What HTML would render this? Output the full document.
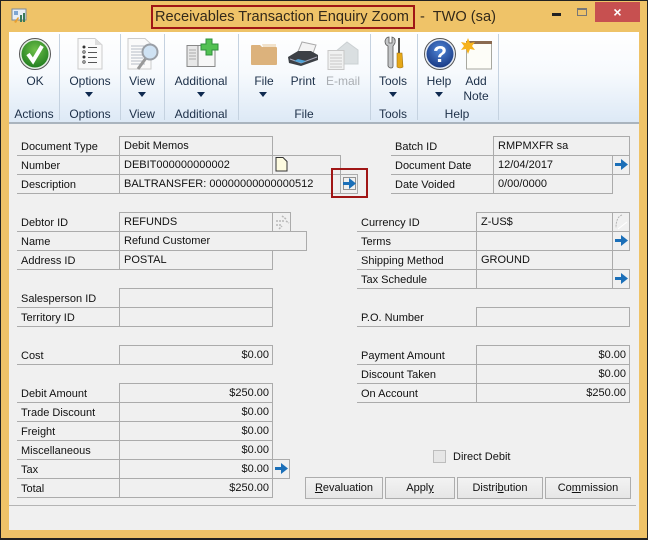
<!DOCTYPE html>
<html><head><meta charset="utf-8">
<style>
html,body{margin:0;padding:0}
body{width:648px;height:540px;overflow:hidden;position:relative;background:#efc368;font-family:"Liberation Sans",sans-serif;font-size:11px;color:#111}
div{box-sizing:border-box}
.a,.b,.l,.t,.g,.v,.r,.k{position:absolute;white-space:nowrap}
.b{border:1px solid #ababab;height:20px;padding:1px 0 0 4px;line-height:17px;overflow:hidden}
.b.r2{text-align:right;padding:1px 3px 0 0}
.l{border-bottom:1px solid #ababab;height:20px;padding-left:4px;line-height:22px}
.t{font-size:12px;color:#1c2f48;text-align:center;transform:translateX(-50%)}
.v{width:1px;background:#c5d2e0;top:34px;height:86px}
.k{width:0;height:0;border-left:4px solid transparent;border-right:4px solid transparent;border-top:5px solid #0f2a50;top:92px;margin-left:-4px}
.btn{position:absolute;top:477px;height:22px;border:1px solid #adadad;background:linear-gradient(#f3f3f3,#e6e6e6);text-align:center;line-height:20px;font-size:11px}
svg{position:absolute;overflow:visible}
</style></head><body>
<div class="a" style="left:0;top:0;width:648px;height:540px;border:1px solid #222;border-width:1px 1px 2px 1px"></div>
<svg style="left:11px;top:8px" width="16" height="16"><rect x="1" y="1" width="14" height="11" fill="#e8eef5" stroke="#7a8a9a"/><rect x="3" y="3" width="4" height="4" fill="#7ea5d0"/><path d="M9 14V7h2v7zM12 14V5h2v9z" fill="#3a7a5a"/><path d="M3 14l4-5 1 1-3 5z" fill="#e8a030"/></svg>
<div class="a" style="left:151px;top:5px;width:264px;height:24px;border:2px solid #a01616"></div>
<div class="a" style="left:155px;top:7px;font-size:14.6px;line-height:20px;color:#33291a">Receivables Transaction Enquiry Zoom</div>
<div class="a" style="left:420px;top:7px;font-size:14.6px;line-height:20px;color:#33291a;white-space:pre">-  TWO (sa)</div>
<div class="a" style="left:552px;top:13px;width:9px;height:3px;background:#222"></div>
<div class="a" style="left:577px;top:8px;width:10px;height:8px;border:1px solid #777;border-top-width:2px"></div>
<div class="a" style="left:595px;top:2px;width:45px;height:20px;background:#c75050;color:#fff;text-align:center;font-size:14px;line-height:20px;font-weight:bold">×</div>

<div class="a" style="left:9px;top:32px;width:630px;height:498px;background:#f0f0f0"></div>
<div class="a" style="left:9px;top:32px;width:630px;height:92px;background:linear-gradient(#fff 0%,#f7fafd 45%,#dde9f6 100%);border-bottom:2px solid #aab4be"></div>
<div class="v" style="left:59px"></div><div class="v" style="left:120px"></div><div class="v" style="left:164px"></div><div class="v" style="left:238px"></div><div class="v" style="left:370px"></div><div class="v" style="left:417px"></div><div class="v" style="left:498px"></div>

<!-- OK -->
<svg style="left:19px;top:38px" width="32" height="32" viewBox="0 0 32 32"><defs><radialGradient id="gr" cx=".5" cy=".35" r=".7"><stop offset="0" stop-color="#6fc04a"/><stop offset="1" stop-color="#1d7a1d"/></radialGradient><radialGradient id="bl" cx=".5" cy=".35" r=".7"><stop offset="0" stop-color="#4f86d8"/><stop offset="1" stop-color="#16357f"/></radialGradient></defs><circle cx="16" cy="16" r="15.500" fill="#e6efe6" stroke="#555"/><circle cx="16" cy="16" r="13.500" fill="url(#gr)"/><path d="M9 16l5 7 9-15" fill="none" stroke="#fff" stroke-width="4"/></svg>
<!-- Options -->
<svg style="left:77px;top:38px" width="26" height="32"><path d="M1 .5H18L25 7V31H1z" fill="#fafafa" stroke="#ccc"/><path d="M18 .5V7H25z" fill="#ddd"/><g fill="#333"><circle cx="7" cy="9" r="1.500"/><circle cx="7" cy="19" r="1.500"/></g><g fill="none" stroke="#555"><circle cx="7" cy="14" r="1.200"/><circle cx="7" cy="24" r="1.200"/><path d="M11 9.500h9M11 14.500h9M11 19.500h9M11 24.500h9"/></g></svg>
<!-- View -->
<svg style="left:127px;top:38px" width="32" height="32"><path d="M1 .5H18L24 6V31H1z" fill="#fafafa" stroke="#ccc"/><path d="M4 8h14M4 11h14M4 14h12M4 17h12M4 20h12M4 23h14M4 26h14" stroke="#b5bcc6"/><path d="M19 20L11 31" stroke="#999" stroke-width="3"/><circle cx="23" cy="14" r="7.500" fill="#cfe2f3" stroke="#9a9fa6" stroke-width="2"/></svg>
<!-- Additional -->
<svg style="left:186px;top:38px" width="33" height="30"><rect x="1" y="7.500" width="28" height="21" fill="#f7f7f7" stroke="#888"/><rect x="1" y="7.500" width="11" height="21" fill="#e8e8e8" stroke="#888"/><path d="M3 12h7M3 15h7M3 18h7M3 21h7" stroke="#aaa"/><path d="M20 1h6v5h6v6h-6v5h-6v-5h-5V6h5z" fill="#52c152" stroke="#2f8f3c"/></svg>
<!-- folder -->
<svg style="left:250px;top:42px" width="28" height="24"><path d="M1 4Q1 3 2 3H10L12 5H26Q27 5 27 6V22Q27 23 26 23H2Q1 23 1 22z" fill="#dcb27c"/><path d="M12 2H26V5H13z" fill="#f1e2cb"/></svg>
<!-- printer -->
<svg style="left:287px;top:40px" width="32" height="28"><path d="M10 14L15 2 29 5 25 16z" fill="#f3f3f3" stroke="#aaa"/><path d="M1 17L11 11H24L31 15V20L14 26 2 23z" fill="#3c4046"/><path d="M3 19L14 23 30 17" stroke="#aab" fill="none"/><path d="M7 21l8 2 4-2-8-2z" fill="#4fa3d8"/></svg>
<!-- email -->
<svg style="left:327px;top:38px" width="32" height="32"><path d="M8 14L20 4 31 12V26H8z" fill="#dadfe1" stroke="#cbd0d2"/><rect x="1" y="12.500" width="16" height="19" fill="#f0f1f1" stroke="#c8c8c8"/><path d="M3 17h12M3 20h12M3 23h12M3 26h12M3 29h12" stroke="#c8c8c8"/></svg>
<!-- tools -->
<svg style="left:384px;top:37px" width="22" height="33"><path d="M1 4Q2 0 5 0V6H8V0Q12 1 11 6Q10 8 9 9V29Q9 31 7 31T4 29V9Q1 8 1 4z" fill="#c4c6c8" stroke="#555" stroke-width=".8"/><rect x="14" y="1" width="2" height="15" fill="#555"/><path d="M13 16h5l1 14q-3 2-6 0z" fill="#e6a818" stroke="#a07010" stroke-width=".6"/></svg>
<!-- help -->
<svg style="left:424px;top:38px" width="32" height="32"><circle cx="16" cy="16" r="15.500" fill="#e6ecf6" stroke="#555"/><circle cx="16" cy="16" r="13.500" fill="url(#bl)"/><text x="16" y="24" font-family="Liberation Sans" font-weight="bold" font-size="23" fill="#fff" text-anchor="middle">?</text></svg>
<!-- note -->
<svg style="left:460px;top:38px" width="33" height="33"><rect x="6.500" y="3.500" width="25" height="27.500" fill="#fdfdf8" stroke="#a8a8a0"/><rect x="6" y="3" width="26" height="3" fill="#8a6a50"/><path d="M8 0l2 5 5-1-3 4 3 4-5-1-2 5-2-5-5 1 3-4-3-4 5 1z" fill="#f6b21c"/></svg>

<div class="t" style="left:35px;top:74px">OK</div>
<div class="t" style="left:90px;top:74px">Options</div><div class="k" style="left:89px"></div>
<div class="t" style="left:142px;top:74px">View</div><div class="k" style="left:142px"></div>
<div class="t" style="left:201px;top:74px">Additional</div><div class="k" style="left:201px"></div>
<div class="t" style="left:264px;top:74px">File</div><div class="k" style="left:263px"></div>
<div class="t" style="left:303px;top:74px">Print</div>
<div class="t" style="left:343px;top:74px;color:#a9adb2">E-mail</div>
<div class="t" style="left:393px;top:74px">Tools</div><div class="k" style="left:393px"></div>
<div class="t" style="left:439px;top:74px">Help</div><div class="k" style="left:439px"></div>
<div class="t" style="left:476px;top:74px">Add</div><div class="t" style="left:476px;top:89px">Note</div>
<div class="t" style="left:34px;top:107px">Actions</div>
<div class="t" style="left:90px;top:107px">Options</div>
<div class="t" style="left:142px;top:107px">View</div>
<div class="t" style="left:201px;top:107px">Additional</div>
<div class="t" style="left:304px;top:107px">File</div>
<div class="t" style="left:393px;top:107px">Tools</div>
<div class="t" style="left:457px;top:107px">Help</div>

<!-- left labels -->
<div class="l" style="left:17px;top:136px;width:102px">Document Type</div>
<div class="l" style="left:17px;top:155px;width:102px">Number</div>
<div class="l" style="left:17px;top:174px;width:102px">Description</div>
<div class="l" style="left:17px;top:212px;width:102px">Debtor ID</div>
<div class="l" style="left:17px;top:231px;width:102px">Name</div>
<div class="l" style="left:17px;top:250px;width:102px">Address ID</div>
<div class="l" style="left:17px;top:288px;width:102px">Salesperson ID</div>
<div class="l" style="left:17px;top:307px;width:102px">Territory ID</div>
<div class="l" style="left:17px;top:345px;width:102px">Cost</div>
<div class="l" style="left:17px;top:383px;width:102px">Debit Amount</div>
<div class="l" style="left:17px;top:402px;width:102px">Trade Discount</div>
<div class="l" style="left:17px;top:421px;width:102px">Freight</div>
<div class="l" style="left:17px;top:440px;width:102px">Miscellaneous</div>
<div class="l" style="left:17px;top:459px;width:102px">Tax</div>
<div class="l" style="left:17px;top:478px;width:102px">Total</div>
<!-- left values -->
<div class="b" style="left:119px;top:136px;width:154px">Debit Memos</div>
<div class="b" style="left:119px;top:155px;width:222px">DEBIT000000000002</div>
<div class="b" style="left:119px;top:174px;width:222px">BALTRANSFER: 00000000000000512</div>
<div class="a" style="left:272px;top:155px;width:1px;height:20px;background:#ababab"></div>
<div class="b" style="left:340px;top:174px;width:18px"></div>
<div class="b" style="left:119px;top:212px;width:154px">REFUNDS</div>
<div class="b" style="left:272px;top:212px;width:19px"></div>
<div class="b" style="left:119px;top:231px;width:188px">Refund Customer</div>
<div class="b" style="left:119px;top:250px;width:154px">POSTAL</div>
<div class="b" style="left:119px;top:288px;width:154px"></div>
<div class="b" style="left:119px;top:307px;width:154px"></div>
<div class="b r2" style="left:119px;top:345px;width:154px">$0.00</div>
<div class="b r2" style="left:119px;top:383px;width:154px">$250.00</div>
<div class="b r2" style="left:119px;top:402px;width:154px">$0.00</div>
<div class="b r2" style="left:119px;top:421px;width:154px">$0.00</div>
<div class="b r2" style="left:119px;top:440px;width:154px">$0.00</div>
<div class="b r2" style="left:119px;top:459px;width:154px">$0.00</div>
<div class="b" style="left:272px;top:459px;width:18px"></div>
<div class="b r2" style="left:119px;top:478px;width:154px">$250.00</div>
<!-- note icon -->
<svg style="left:275px;top:157px" width="13" height="15"><path d="M1 .5H8L12 4.500V14H1z" fill="#fdfbe0" stroke="#333"/></svg>
<!-- lookup faint -->
<svg style="left:273px;top:213px" width="17" height="17"><path d="M3 8h8M3 12h6M9 3l4 3M6 16l3-3M13 8l3 2" stroke="#b8b8b8" stroke-width="1.500" stroke-dasharray="2 1" fill="none"/></svg>
<!-- right labels -->
<div class="l" style="left:391px;top:136px;width:102px">Batch ID</div>
<div class="l" style="left:391px;top:155px;width:102px">Document Date</div>
<div class="l" style="left:391px;top:174px;width:102px">Date Voided</div>
<div class="b" style="left:493px;top:136px;width:137px">RMPMXFR sa</div>
<div class="b" style="left:493px;top:155px;width:120px">12/04/2017</div>
<div class="b" style="left:612px;top:155px;width:18px"></div>
<div class="b" style="left:493px;top:174px;width:120px">0/00/0000</div>
<div class="l" style="left:357px;top:212px;width:119px">Currency ID</div>
<div class="l" style="left:357px;top:231px;width:119px">Terms</div>
<div class="l" style="left:357px;top:250px;width:119px">Shipping Method</div>
<div class="l" style="left:357px;top:269px;width:119px">Tax Schedule</div>
<div class="b" style="left:476px;top:212px;width:137px">Z-US$</div>
<div class="b" style="left:612px;top:212px;width:18px"></div>
<div class="b" style="left:476px;top:231px;width:137px"></div>
<div class="b" style="left:612px;top:231px;width:18px"></div>
<div class="b" style="left:476px;top:250px;width:137px">GROUND</div>
<div class="b" style="left:476px;top:269px;width:137px"></div>
<div class="b" style="left:612px;top:269px;width:18px"></div>
<div class="l" style="left:357px;top:307px;width:119px">P.O. Number</div>
<div class="b" style="left:476px;top:307px;width:154px"></div>
<div class="l" style="left:357px;top:345px;width:119px">Payment Amount</div>
<div class="l" style="left:357px;top:364px;width:119px">Discount Taken</div>
<div class="l" style="left:357px;top:383px;width:119px">On Account</div>
<div class="b r2" style="left:476px;top:345px;width:154px">$0.00</div>
<div class="b r2" style="left:476px;top:364px;width:154px">$0.00</div>
<div class="b r2" style="left:476px;top:383px;width:154px">$250.00</div>
<svg style="left:613px;top:213px" width="16" height="17"><path d="M9 2Q3 4 3 15" stroke="#b5b5b5" fill="none" stroke-dasharray="2 1"/><path d="M5 16l9-7" stroke="#fff"/></svg>
<!-- arrows -->
<svg width="0" height="0"><defs><path id="ar" d="M0 5H6V1L13 6.500 6 12V8H0z"/></defs></svg>
<svg style="left:615px;top:158px" width="14" height="14"><use href="#ar" fill="#1b6fb8"/></svg>
<svg style="left:615px;top:234px" width="14" height="14"><use href="#ar" fill="#1b6fb8"/></svg>
<svg style="left:615px;top:272px" width="14" height="14"><use href="#ar" fill="#1b6fb8"/></svg>
<svg style="left:275px;top:462px" width="14" height="14"><use href="#ar" fill="#1b6fb8"/></svg>
<svg style="left:343px;top:177px" width="14" height="14"><rect x="0.500" y="0.500" width="12" height="12" fill="none" stroke="#333" stroke-dasharray="1 1"/><use href="#ar" fill="#1b6fb8"/></svg>
<div class="a" style="left:331px;top:168px;width:37px;height:30px;border:2px solid #a01616"></div>
<!-- checkbox -->
<div class="a" style="left:433px;top:450px;width:13px;height:13px;border:1px solid #bdbdbd;background:#e6e6e6"></div>
<div class="a" style="left:453px;top:450px;line-height:14px;font-size:11px">Direct Debit</div>
<div class="btn" style="left:305px;width:78px"><u>R</u>evaluation</div>
<div class="btn" style="left:385px;width:70px">Appl<u>y</u></div>
<div class="btn" style="left:457px;width:86px">Distri<u>b</u>ution</div>
<div class="btn" style="left:545px;width:86px">Co<u>m</u>mission</div>
<div class="a" style="left:9px;top:505px;width:627px;height:1px;background:#b4b4b4"></div>
</body></html>
